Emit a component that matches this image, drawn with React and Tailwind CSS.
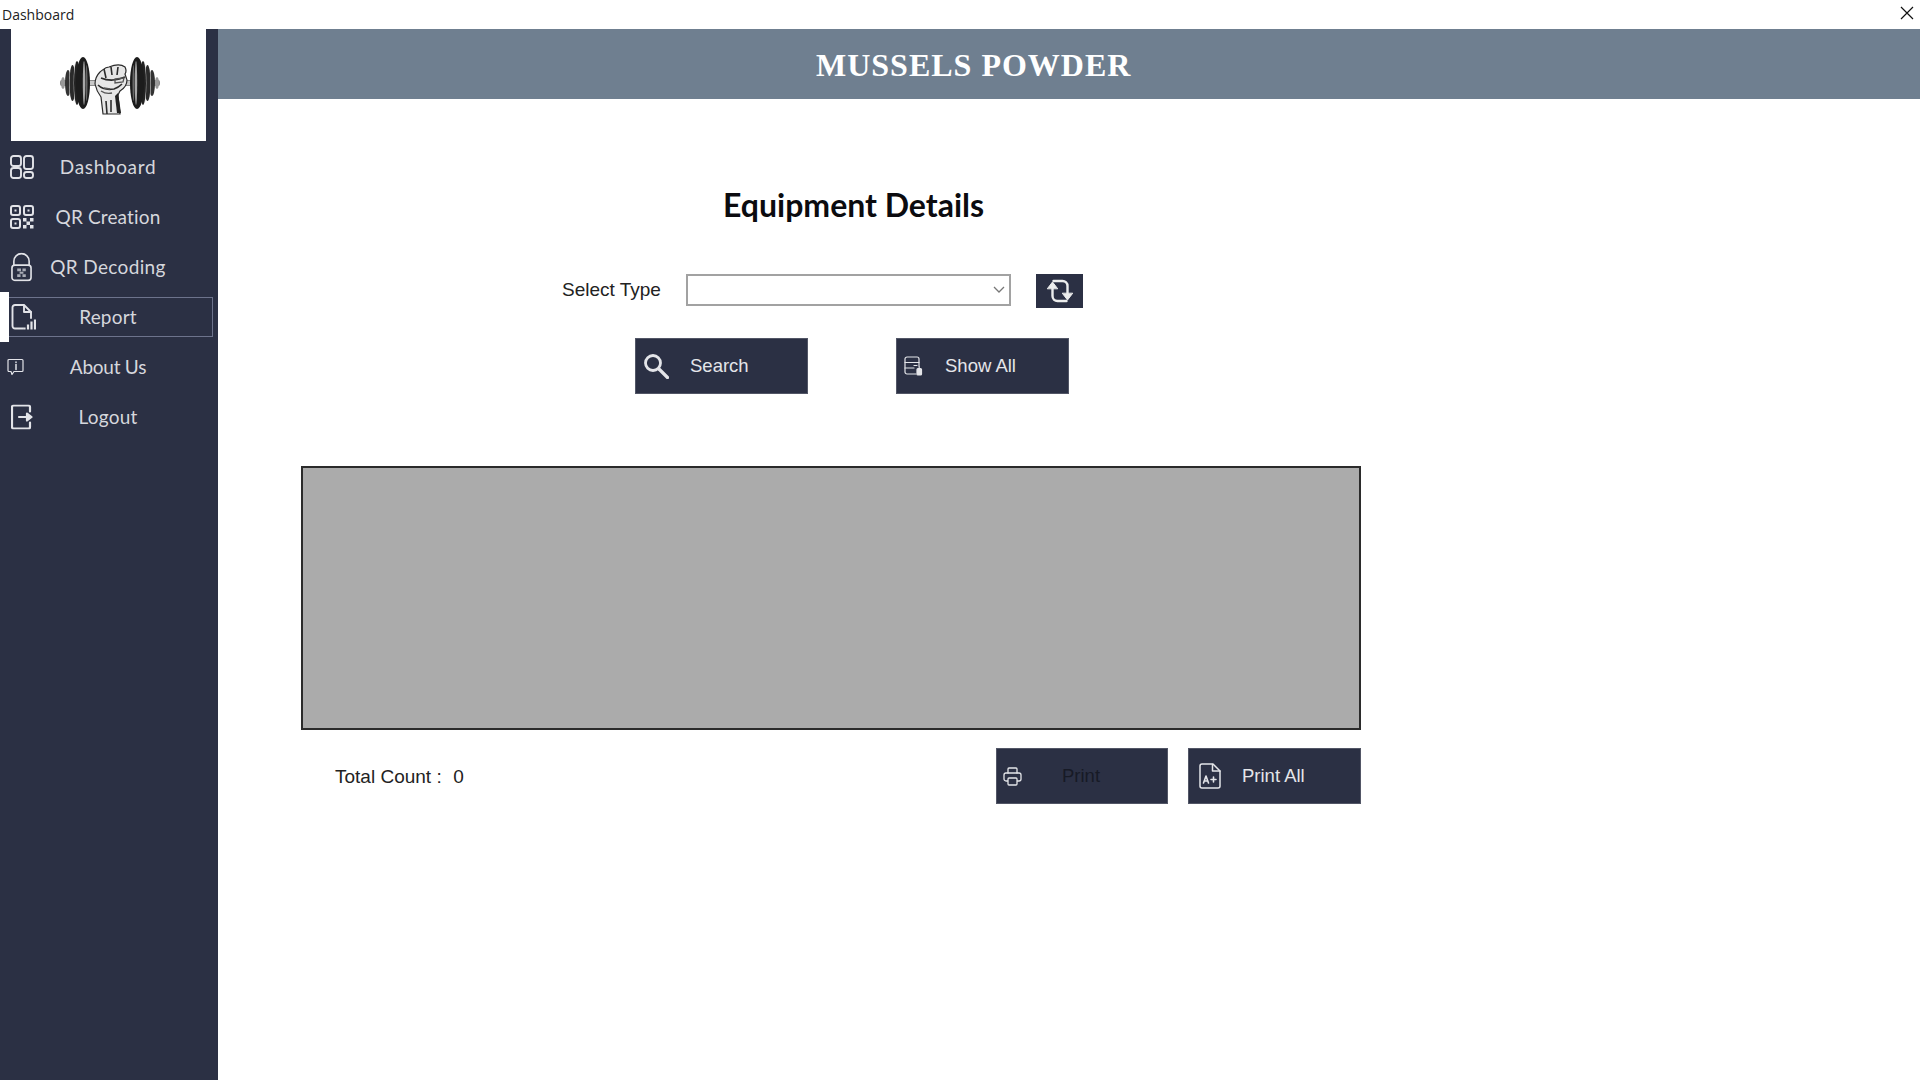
import React from "react";

const Ic = ({ className = "", children, vb = "0 0 24 24", sw = 2 }) => (
  <svg viewBox={vb} className={className} fill="none" stroke="currentColor" strokeWidth={sw} strokeLinecap="round" strokeLinejoin="round">{children}</svg>
);

const DashIcon = () => (
  <Ic className="w-[24px] h-[24px]" sw={1.9}>
    <rect x="1" y="1" width="10" height="10" rx="2.5" /><rect x="14" y="1" width="9" height="13" rx="2.5" />
    <rect x="1" y="13" width="10" height="10" rx="2.5" /><rect x="14" y="17" width="9" height="6" rx="2.5" />
  </Ic>
);
const QrIcon = () => (
  <Ic className="w-[24px] h-[24px]" sw={2}>
    <rect x="1" y="1" width="9" height="9" rx="2" /><rect x="14" y="1" width="9" height="9" rx="2" /><rect x="1" y="14" width="9" height="9" rx="2" />
    <rect x="4.5" y="4.5" width="2" height="2" fill="currentColor" stroke="none" /><rect x="17.5" y="4.5" width="2" height="2" fill="currentColor" stroke="none" /><rect x="4.5" y="17.5" width="2" height="2" fill="currentColor" stroke="none" />
    <path d="M13 13h3.500v3.500H13zM20 13h3.500v3.500H20zM16.500 16.500H20V20h-3.500zM13 20h3.500v3.500H13zM20 20h3.500v3.500H20z" fill="currentColor" stroke="none" />
  </Ic>
);
const LockIcon = () => (
  <Ic className="w-[21px] h-[29px]" vb="0 0 22 30" sw={1.7}>
    <path d="M3 13V9a8 8 0 0 1 16 0v4" /><rect x="1" y="13" width="20" height="16" rx="3" />
    <path d="M6.500 16.500h4v3h-4zM12 16.500h3.500v3H12zM9 20h4v2H9zM6.500 22.500h3.500v3H6.500zM12 22.500h3.500v3H12z" fill="#a9acb6" stroke="none" />
  </Ic>
);
const ReportIcon = () => (
  <Ic className="w-[25px] h-[27px]" vb="0 0 25 27" sw={1.9}>
    <path d="M12 25H4a2.500 2.500 0 0 1-2.500-2.500V4A2.500 2.500 0 0 1 4 1.500h9l7 7v6" /><path d="M13 2v6.500h7" />
    <path d="M13.500 26v-2M17 26v-5M20.500 26v-8M24 26V16" strokeWidth="2.200" strokeLinecap="butt" />
  </Ic>
);
const AboutIcon = () => (
  <Ic className="w-[17px] h-[17px]" vb="0 0 17 17" sw={1.2}>
    <path d="M2 1h13a1 1 0 0 1 1 1v10a1 1 0 0 1-1 1H7l-2 3-1-3H2a1 1 0 0 1-1-1V2a1 1 0 0 1 1-1z" /><path d="M9 6v5" strokeWidth="1.500" /><path d="M9 3.500v.5" strokeWidth="1.500" />
  </Ic>
);
const LogoutIcon = () => (
  <Ic className="w-[22px] h-[25px]" vb="0 0 22 25" sw={2.2}>
    <path d="M19 7V2.500A1.500 1.500 0 0 0 17.500 1h-15A1.500 1.500 0 0 0 1 2.500v20A1.500 1.500 0 0 0 2.500 24h15a1.500 1.500 0 0 0 1.500-1.500V18" />
    <path d="M8 12.500h10" /><path d="M16 9l4.500 3.500L16 16z" fill="currentColor" />
  </Ic>
);
const SearchIcon = () => (
  <Ic className="w-[26px] h-[26px]" vb="0 0 26 26" sw={2.800}>
    <circle cx="10" cy="10" r="7.500" /><path d="M16 16l8.500 8.500" strokeWidth="3.200" />
  </Ic>
);
const ShowAllIcon = () => (
  <Ic className="w-[19px] h-[20px]" vb="0 0 19 20" sw={1.200}>
    <path d="M12 18H3a2 2 0 0 1-2-2V3a2 2 0 0 1 2-2h10a2 2 0 0 1 2 2v7" /><path d="M1 6.500h14M1 12h9" /><path d="M10 9.500h3" />
    <rect x="13" y="12.500" width="4.500" height="6.500" rx="1" fill="currentColor" /><path d="M15.200 10.500v2" />
  </Ic>
);
const RefreshIcon = () => (
  <Ic className="w-[30px] h-[26px]" vb="0 0 30 26" sw={2.400}>
    <path d="M7.500 10v8a5 5 0 0 0 5 5h9" /><path d="M22.500 16V8a5 5 0 0 0-5-5h-9" />
    <path d="M2.500 10.500L7.500 4l5 6.500z" fill="currentColor" strokeWidth="1" /><path d="M17.500 15.500l5 6.500 5-6.500z" fill="currentColor" strokeWidth="1" />
  </Ic>
);
const PrintIcon = () => (
  <Ic className="w-[19px] h-[19px]" vb="0 0 19 19" sw={1.300}>
    <path d="M5 6V2a1 1 0 0 1 1-1h7a1 1 0 0 1 1 1v4" /><rect x="1" y="6" width="17" height="8" rx="2" /><rect x="5" y="11" width="9" height="7" rx="1" fill="#2b3044" />
  </Ic>
);
const PrintAllIcon = () => (
  <Ic className="w-[22px] h-[26px]" vb="0 0 22 26" sw={1.500}>
    <path d="M3 1h11l7 7v15a2 2 0 0 1-2 2H3a2 2 0 0 1-2-2V3a2 2 0 0 1 2-2z" /><path d="M13.500 1.500V8H21" />
    <path d="M4.500 20l2.500-7 2.500 7M5.500 18h3M12 16.500h5M14.500 14v5" strokeWidth="1.600" />
  </Ic>
);

const plates = [
  [3, 6, 2, "#9a9a9a"],
  [8, 13, 3, "#333"], [10.500, 14, 1.500, "#d8d8d8"], [12.500, 18, 3, "#2a2a2a"], [15, 19, 1.300, "#d8d8d8"],
  [17, 22, 3, "#222"], [19.500, 23, 1.300, "#d8d8d8"], [23, 26, 7, "#1c1c1c"], [24, 22, 1.200, "#a8a8a8"], [26.500, 18, 1, "#666"],
];

const Logo = () => (
  <svg viewBox="0 0 100 62" className="w-[100px] h-[62px]">
    <rect x="0" y="26" width="100" height="6" rx="2" fill="#8a8a8a" />
    <rect x="28" y="27" width="44" height="4" fill="#c9c9c9" />
    {plates.map(([cx, ry, rx, f], i) => (
      <g key={i}>
        <ellipse cx={cx} cy="29" rx={rx} ry={ry} fill={f} />
        <ellipse cx={100 - cx} cy="29" rx={rx} ry={ry} fill={f} />
      </g>
    ))}
    <path d="M35 30c0-5 2-9 5-12 3-2 5-5 9-5 5-2 12-3 16 0 1 2 2 4 0 7l2 6c0 4-2 8-7 11-1 2-2 3-2 5l2 18H43l-2-17c-3-4-5-8-6-13z" fill="#e6e6e6" stroke="#2a2a2a" strokeWidth="1.200" />
    <path d="M44 15l2 9M51 13l1 8M58 13l-1 8M41 24c7 3 15 3 24-1M38 31c4 4 10 5 16 4 3-1 6-3 8-5M46 47l1 13M51 46l0 12" fill="none" stroke="#2c2c2c" strokeWidth="1.600" />
    <path d="M55 25l9-1-1 4-8 1zM41 37c3 2 7 3 11 2M44 34l6 1" fill="none" stroke="#555" strokeWidth="1.300" />
    <path d="M58 39l3 20h-4l-2-17z" fill="#222" />
  </svg>
);

const nav = [
  { label: "Dashboard", icon: <DashIcon />, left: "left-[10px]", track: "tracking-[0.65px]" },
  { label: "QR Creation", icon: <QrIcon />, left: "left-[10px]", track: "tracking-[0.15px]" },
  { label: "QR Decoding", icon: <LockIcon />, left: "left-[11px]", track: "tracking-[0.35px]" },
  { label: "Report", icon: <ReportIcon />, active: true, left: "left-[11px]", track: "tracking-[0.2px]" },
  { label: "About Us", icon: <AboutIcon />, left: "left-[7px]", track: "tracking-[-0.25px]" },
  { label: "Logout", icon: <LogoutIcon />, left: "left-[11px]", track: "tracking-[0.2px]" },
];

const Btn = ({ icon, children, iconCls, textCls = "text-[#e4e5e9]", w = "w-[173px]", textLeft }) => (
  <div className={`${w} h-[56px] bg-[#2b3044] border border-[#8e919c]/40 flex items-center shrink-0 text-[18.500px]`}>
    <span className={`${iconCls} text-[#e4e5e9] flex items-center shrink-0`}>{icon}</span>
    <span className={`${textLeft} ${textCls} leading-none`}>{children}</span>
  </div>
);

export default function App() {
  return (
    <div className="w-[1920px] h-[1080px] bg-white flex flex-col overflow-hidden font-['Liberation_Sans',sans-serif]">
      <div className="h-[29px] flex items-center justify-between shrink-0">
        <span className="pl-[2px] text-[14px] text-[#222] font-['Open_Sans',sans-serif] leading-none">Dashboard</span>
        <svg viewBox="0 0 14 14" className="w-[14px] h-[14px] mr-[6px] mb-[3px]" stroke="#111" strokeWidth="1.200"><path d="M1 1l12 12M13 1L1 13" /></svg>
      </div>
      <div className="flex-1 flex min-h-0">
        <aside className="w-[218px] bg-[#2b3044] shrink-0 flex flex-col">
          <div className="ml-[11px] w-[195px] h-[112px] bg-white flex items-center justify-center shrink-0">
            <span className="ml-[2px] flex"><Logo /></span>
          </div>
          <nav className="mt-[1px] flex flex-col">
            {nav.map((n) => (
              <div key={n.label} className="relative h-[50px] flex items-center">
                {n.active && <div className="absolute left-0 top-0 w-[9px] h-[50px] bg-white z-10" />}
                {n.active && <div className="absolute left-[8px] top-[5px] w-[205px] h-[40px] border border-[#6d738c]" />}
                <span className={`absolute ${n.left} top-1/2 -translate-y-1/2 text-[#e2e3e8] flex z-20`}>{n.icon}</span>
                <span className={`w-full text-center text-[19px] text-[#d6d7dd] font-['Lato',sans-serif] pr-[2px] pt-[1px] ${n.track}`}>{n.label}</span>
              </div>
            ))}
          </nav>
        </aside>
        <main className="flex-1 min-w-0 flex flex-col">
          <header className="h-[70px] bg-[#6f7f90] flex items-center pl-[598px] shrink-0">
            <span className="font-['Liberation_Serif',serif] font-bold text-white text-[32px] tracking-[1px] leading-none mt-[1px]">MUSSELS POWDER</span>
          </header>
          <h1 className="mt-[87px] ml-[505px] text-[32px] leading-[38px] font-bold text-[#0b0b0f] font-['Lato',sans-serif]">Equipment Details</h1>
          <div className="mt-[50px] ml-[344px] flex items-start">
            <span className="w-[124px] h-[31px] flex items-center text-[19px] text-[#222] leading-none">Select Type</span>
            <div className="w-[325px] h-[32px] border-2 border-[#a2a2a2] bg-white flex items-center justify-end pr-[4px]">
              <svg viewBox="0 0 12 8" className="w-[12px] h-[8px]" fill="none" stroke="#777" strokeWidth="1.300"><path d="M1 1l5 5 5-5" /></svg>
            </div>
            <div className="ml-[25px] w-[47px] h-[34px] bg-[#2b3044] flex items-center justify-center text-[#eceded]"><RefreshIcon /></div>
          </div>
          <div className="mt-[30px] ml-[417px] flex gap-[88px]">
            <Btn icon={<SearchIcon />} iconCls="ml-[7px]" textLeft="ml-[21px]">Search</Btn>
            <Btn icon={<ShowAllIcon />} iconCls="ml-[7px]" textLeft="ml-[22px]">Show All</Btn>
          </div>
          <div className="mt-[72px] ml-[83px] w-[1060px] h-[264px] bg-[#ababab] border-2 border-[#2b2b2b]" />
          <div className="mt-[18px] ml-[83px] w-[1060px] flex items-center">
            <span className="ml-[34px] text-[19px] text-[#222] leading-none whitespace-pre flex-1">Total Count :  <span className="ml-[1px]">0</span></span>
            <Btn icon={<PrintIcon />} iconCls="ml-[6px]" w="w-[172px]" textCls="text-[#171a26]" textLeft="ml-[40px]">Print</Btn>
            <div className="w-[20px]" />
            <Btn icon={<PrintAllIcon />} iconCls="ml-[10px]" textLeft="ml-[21px]">Print All</Btn>
          </div>
        </main>
      </div>
    </div>
  );
}
